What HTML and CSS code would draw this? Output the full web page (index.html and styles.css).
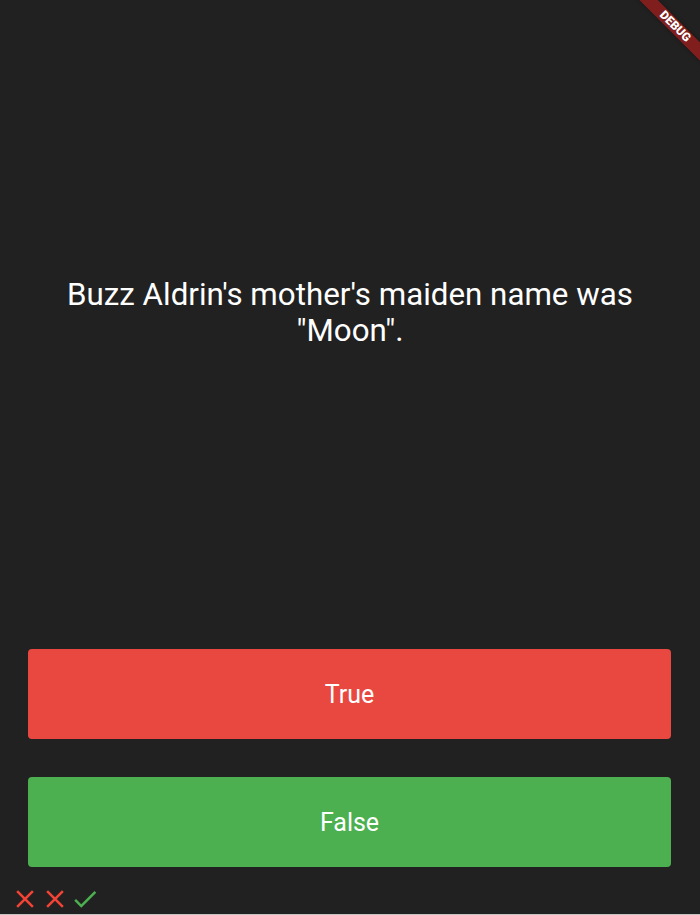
FILE: index.html
```html
<!DOCTYPE html>
<html>
<head>
<meta charset="utf-8">
<link rel="stylesheet" href="styles.css">
</head>
<body>
<div class="app">
  <div class="question">
    <p class="question-text">Buzz Aldrin's mother's maiden name was "Moon".</p>
  </div>
  <div class="answers">
    <button class="answer answer-true">True</button>
    <button class="answer answer-false">False</button>
  </div>
  <div class="score">
    <svg class="icon wrong" viewBox="0 0 24 24"><path d="M19 6.41L17.59 5 12 10.59 6.41 5 5 6.41 10.59 12 5 17.59 6.41 19 12 13.41 17.59 19 19 17.59 13.41 12z"/></svg>
    <svg class="icon wrong" viewBox="0 0 24 24"><path d="M19 6.41L17.59 5 12 10.59 6.41 5 5 6.41 10.59 12 5 17.59 6.41 19 12 13.41 17.59 19 19 17.59 13.41 12z"/></svg>
    <svg class="icon right" viewBox="0 0 24 24"><path d="M9 16.17L4.83 12l-1.42 1.41L9 19 21 7l-1.41-1.41z"/></svg>
  </div>
  <div class="debug-banner">DEBUG</div>
</div>
</body>
</html>
```
FILE: styles.css
```css
html, body {
  margin: 0;
  padding: 0;
  background: #212121;
}
.app {
  position: relative;
  width: 700px;
  height: 914px;
  border-bottom: 1px solid #c4c4c4;
  overflow: hidden;
  display: flex;
  flex-direction: column;
  font-family: Roboto, "Liberation Sans", sans-serif;
}
.question {
  height: 650px;
  display: flex;
  align-items: center;
  justify-content: center;
  padding: 0 40px 24px;
  box-sizing: border-box;
}
.question-text {
  margin: 0;
  color: #ffffff;
  font-size: 31.3px;
  line-height: 36px;
  text-align: center;
}
.answers {
  display: flex;
  flex-direction: column;
  gap: 38px;
  padding: 0 29px 0 28px;
}
.answer {
  height: 90px;
  width: 100%;
  border: none;
  border-radius: 4px;
  color: #ffffff;
  font-family: Roboto, "Liberation Sans", sans-serif;
  font-size: 25px;
  padding: 0;
}
.answer-true {
  background: #e94841;
}
.answer-false {
  background: #4caf50;
}
.score {
  display: flex;
  padding: 17px 0 0 10px;
}
.icon {
  width: 30px;
  height: 30px;
  display: block;
}
.wrong {
  fill: #f44336;
}
.right {
  fill: #4caf50;
}
.debug-banner {
  position: absolute;
  left: 614.5px;
  top: 19.5px;
  width: 120px;
  height: 13px;
  transform: rotate(45deg);
  background: rgba(183, 28, 28, 0.63);
  box-shadow: 0 0 4px rgba(0, 0, 0, 0.4);
  color: #ffffff;
  font-size: 12px;
  font-weight: 900;
  line-height: 13px;
  text-align: center;
}
```
